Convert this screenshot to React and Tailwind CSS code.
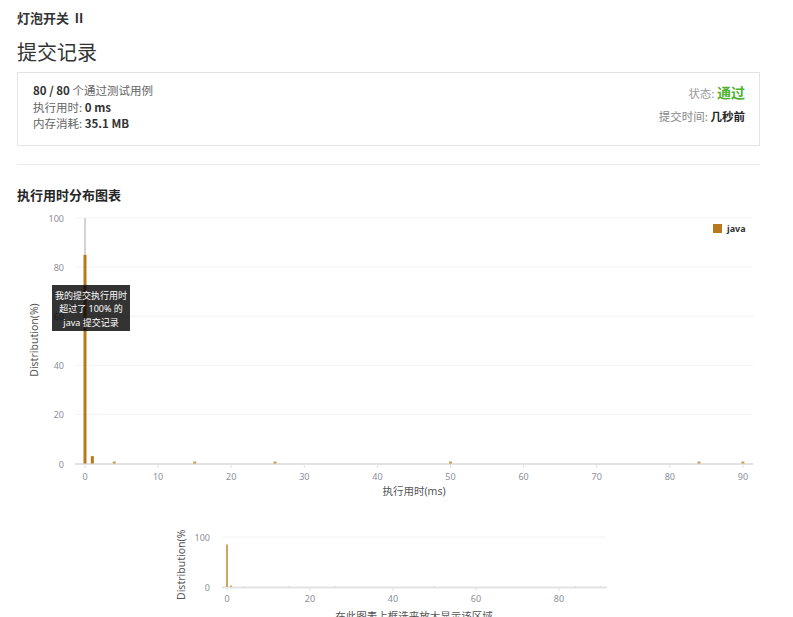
import React from 'react'

const FONT = "'Noto Sans', 'Noto Sans CJK SC', sans-serif"
const BAR = '#b8781f'

const yTicks = [100, 80, 60, 40, 20, 0]
const xTicks = [0, 10, 20, 30, 40, 50, 60, 70, 80, 90]
const bars = [
  { x: 0, v: 85 },
  { x: 1, v: 3 },
  { x: 4, v: 0.8 },
  { x: 15, v: 0.8 },
  { x: 26, v: 0.8 },
  { x: 50, v: 0.8 },
  { x: 84, v: 0.8 },
  { x: 90, v: 0.8 },
]

// main chart scale (page coordinates)
const mx = (v) => 85 + v * 7.31
const my = (v) => 463.5 - v * 2.455

// mini chart scale
const sx = (v) => 227 + v * 4.15
const sy = (v) => 587 - v * 0.5

function MainChart() {
  return (
    <svg width="743" height="300" viewBox="17 205 743 300" className="block" fontFamily={FONT}>
      {yTicks.map((t) => (
        <g key={t}>
          {t !== 0 && <line x1="75" x2="753" y1={my(t)} y2={my(t)} stroke="#f2f2f2" strokeWidth="1" />}
          <text x="64" y={my(t) + 4} fontSize="9" fill="#8a8f99" textAnchor="end">{t}</text>
        </g>
      ))}
      <line x1="75" x2="753" y1="464" y2="464" stroke="#e3e3e3" strokeWidth="2" />
      {xTicks.map((t) => (
        <g key={t}>
          <line x1={mx(t)} x2={mx(t)} y1="465" y2="468" stroke="#e3e3e3" strokeWidth="1" />
          <text x={mx(t)} y="480" fontSize="9" fill="#8a8f99" textAnchor="middle">{t}</text>
        </g>
      ))}
      <text x="414" y="495" fontSize="10.5" fill="#555" textAnchor="middle">执行用时(ms)</text>
      <text x="0" y="0" fontSize="10.5" fill="#555" textAnchor="middle" transform="translate(38 340) rotate(-90)">Distribution(%)</text>

      <line x1={mx(0)} x2={mx(0)} y1="218" y2={my(85)} stroke="#d4d4d4" strokeWidth="2" />
      {bars.map((b) => (
        <rect key={b.x} x={mx(b.x) - 1.5} y={my(b.v)} width="3" height={463.5 - my(b.v)} fill={BAR} opacity={b.v < 2 ? 0.75 : 1} />
      ))}

      <rect x="713" y="224" width="9" height="9" fill={BAR} />
      <text x="727" y="232" fontSize="9" fontWeight="700" fill="#333">java</text>

      <rect x="52" y="285" width="78" height="46" fill="rgba(0,0,0,0.8)" />
      <g fontSize="9" fill="#fff" textAnchor="middle">
        <text x="91" y="299">我的提交执行用时</text>
        <text x="91" y="312">超过了 100% 的</text>
        <text x="91" y="326">java 提交记录</text>
      </g>
    </svg>
  )
}

function MiniChart() {
  return (
    <svg width="743" height="102" viewBox="17 515 743 102" className="block mt-[10px]" fontFamily={FONT}>
      <defs>
        <clipPath id="ylab">
          <rect x="150" y="530" width="60" height="90" />
        </clipPath>
      </defs>
      <line x1="222" x2="607" y1={sy(100)} y2={sy(100)} stroke="#f2f2f2" strokeWidth="1" />
      <line x1="222" x2="607" y1="587.5" y2="587.5" stroke="#e3e3e3" strokeWidth="2" />
      <text x="210" y={sy(100) + 4} fontSize="9" fill="#8a8f99" textAnchor="end">100</text>
      <text x="210" y={sy(0) + 4} fontSize="9" fill="#8a8f99" textAnchor="end">0</text>
      {[0, 20, 40, 60, 80].map((t) => (
        <g key={t}>
          <line x1={sx(t)} x2={sx(t)} y1="588" y2="591" stroke="#e3e3e3" strokeWidth="1" />
          <text x={sx(t)} y="602" fontSize="9" fill="#8a8f99" textAnchor="middle">{t}</text>
        </g>
      ))}
      {bars.map((b) => (
        <rect key={b.x} x={sx(b.x) - 1} y={sy(Math.max(b.v, 1.5))} width="2" height={587 - sy(Math.max(b.v, 1.5))} fill="#d6a35e" opacity={b.v < 2 ? 0.35 : 1} />
      ))}
      <g clipPath="url(#ylab)">
        <text x="0" y="0" fontSize="10.5" fill="#555" textAnchor="start" transform="translate(185 600) rotate(-90)">Distribution(%)</text>
      </g>
      <text x="414" y="620" fontSize="10.5" fill="#555" textAnchor="middle">在此图表上框选来放大显示该区域</text>
    </svg>
  )
}

export default function App() {
  return (
    <div className="w-[793px] h-[617px] overflow-hidden bg-white font-['Noto_Sans','Noto_Sans_CJK_SC',sans-serif] text-[#333]">
      <div className="w-[743px] ml-[17px] pt-[8px]">
        <h3 className="text-[13px] leading-[20px] font-bold text-[#333]">灯泡开关 Ⅱ</h3>
        <h1 className="mt-[11px] text-[20px] leading-[28px] text-[#333]">提交记录</h1>

        <div className="mt-[5px] h-[74px] border border-[#e3e3e3] flex justify-between pl-[15px] pr-[14px] pt-[9px] font-['Noto_Sans_CJK_SC',sans-serif]">
          <div className="text-[11.5px] leading-[16.5px] text-[#666]">
            <div><span className="font-bold text-[#333]">80 / 80</span> 个通过测试用例</div>
            <div>执行用时: <span className="font-bold text-[#333]">0 ms</span></div>
            <div>内存消耗: <span className="font-bold text-[#333]">35.1 MB</span></div>
          </div>
          <div className="text-right">
            <div className="h-[20px] leading-[20px] text-[11.5px] text-[#999]">
              状态: <span className="text-[14px] font-bold text-[#4fb233]">通过</span>
            </div>
            <div className="mt-[4px] h-[20px] leading-[20px] text-[11.5px] text-[#888]">
              提交时间: <span className="font-bold text-[#262626]">几秒前</span>
            </div>
          </div>
        </div>

        <hr className="mt-[18px] border-0 border-t border-[#eaeaea]" />

        <h4 className="mt-[20px] text-[13px] leading-[20px] font-bold text-[#262626]">执行用时分布图表</h4>

        <MainChart />
        <MiniChart />
      </div>
    </div>
  )
}
